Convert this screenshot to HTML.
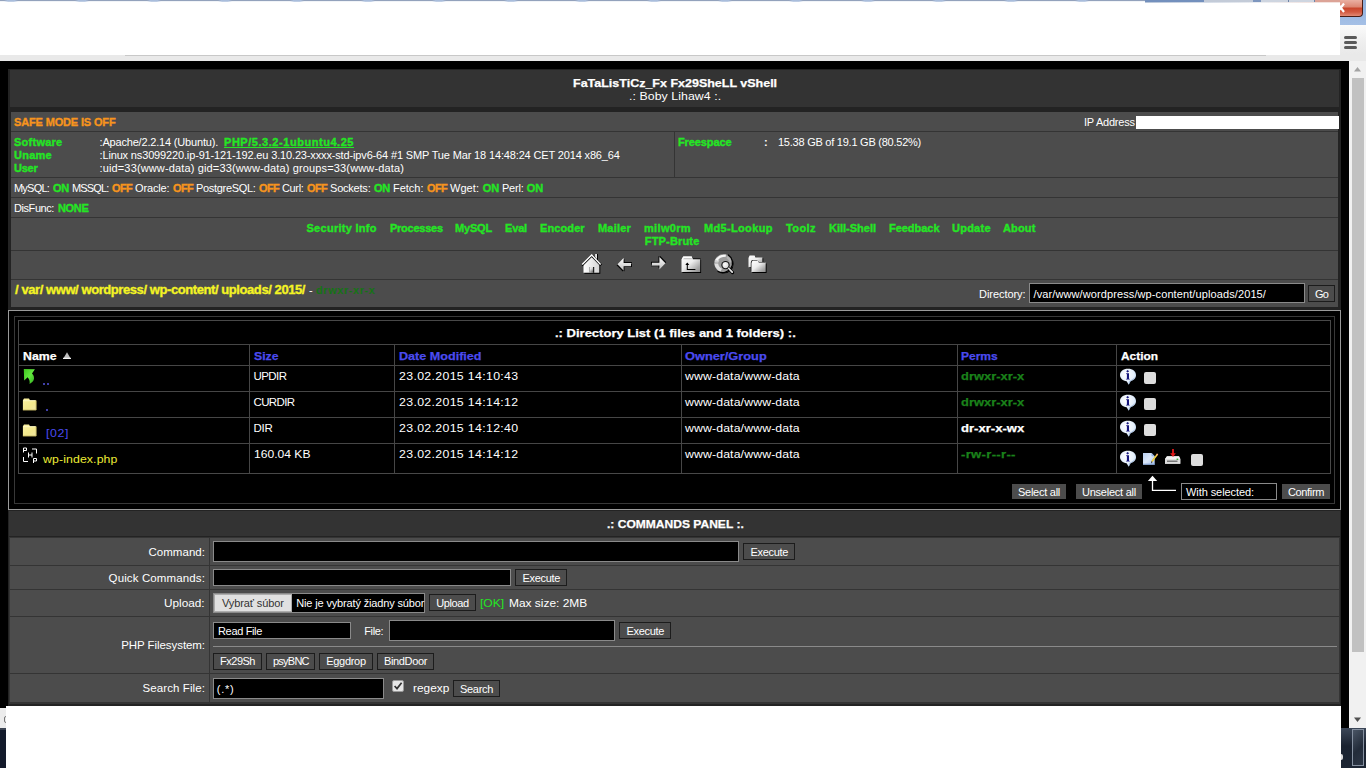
<!DOCTYPE html>
<html><head><meta charset="utf-8"><title>Fx29SheLL</title>
<style>
html,body{margin:0;padding:0;width:1366px;height:768px;overflow:hidden;background:#000;font-family:"Liberation Sans",sans-serif;}
.b{position:absolute;box-sizing:border-box;}
.t{position:absolute;transform-origin:0 0;white-space:pre;line-height:normal;color:#fff;font-family:"Liberation Sans",sans-serif;}
.i{position:absolute;overflow:visible;}

</style></head>
<body>
<div class="b" style="left:0px;top:0px;width:1366px;height:1px;background:#93a2bc;"></div>
<div class="b" style="left:0px;top:1px;width:1366px;height:1px;background:#f1f4f8;"></div>
<div class="b" style="left:4px;top:0px;width:14px;height:1px;background:linear-gradient(90deg,rgba(169,189,220,0),#a9bddc 25%,#a9bddc 75%,rgba(169,189,220,0));"></div>
<div class="b" style="left:4px;top:1px;width:14px;height:1px;background:linear-gradient(90deg,rgba(190,205,228,0),#becde4 30%,#becde4 70%,rgba(190,205,228,0));"></div>
<div class="b" style="left:75px;top:0px;width:14px;height:1px;background:linear-gradient(90deg,rgba(169,189,220,0),#a9bddc 25%,#a9bddc 75%,rgba(169,189,220,0));"></div>
<div class="b" style="left:75px;top:1px;width:14px;height:1px;background:linear-gradient(90deg,rgba(190,205,228,0),#becde4 30%,#becde4 70%,rgba(190,205,228,0));"></div>
<div class="b" style="left:147px;top:0px;width:14px;height:1px;background:linear-gradient(90deg,rgba(169,189,220,0),#a9bddc 25%,#a9bddc 75%,rgba(169,189,220,0));"></div>
<div class="b" style="left:147px;top:1px;width:14px;height:1px;background:linear-gradient(90deg,rgba(190,205,228,0),#becde4 30%,#becde4 70%,rgba(190,205,228,0));"></div>
<div class="b" style="left:218px;top:0px;width:14px;height:1px;background:linear-gradient(90deg,rgba(169,189,220,0),#a9bddc 25%,#a9bddc 75%,rgba(169,189,220,0));"></div>
<div class="b" style="left:218px;top:1px;width:14px;height:1px;background:linear-gradient(90deg,rgba(190,205,228,0),#becde4 30%,#becde4 70%,rgba(190,205,228,0));"></div>
<div class="b" style="left:290px;top:0px;width:14px;height:1px;background:linear-gradient(90deg,rgba(169,189,220,0),#a9bddc 25%,#a9bddc 75%,rgba(169,189,220,0));"></div>
<div class="b" style="left:290px;top:1px;width:14px;height:1px;background:linear-gradient(90deg,rgba(190,205,228,0),#becde4 30%,#becde4 70%,rgba(190,205,228,0));"></div>
<div class="b" style="left:361px;top:0px;width:14px;height:1px;background:linear-gradient(90deg,rgba(169,189,220,0),#a9bddc 25%,#a9bddc 75%,rgba(169,189,220,0));"></div>
<div class="b" style="left:361px;top:1px;width:14px;height:1px;background:linear-gradient(90deg,rgba(190,205,228,0),#becde4 30%,#becde4 70%,rgba(190,205,228,0));"></div>
<div class="b" style="left:432px;top:0px;width:14px;height:1px;background:linear-gradient(90deg,rgba(169,189,220,0),#a9bddc 25%,#a9bddc 75%,rgba(169,189,220,0));"></div>
<div class="b" style="left:432px;top:1px;width:14px;height:1px;background:linear-gradient(90deg,rgba(190,205,228,0),#becde4 30%,#becde4 70%,rgba(190,205,228,0));"></div>
<div class="b" style="left:504px;top:0px;width:14px;height:1px;background:linear-gradient(90deg,rgba(169,189,220,0),#a9bddc 25%,#a9bddc 75%,rgba(169,189,220,0));"></div>
<div class="b" style="left:504px;top:1px;width:14px;height:1px;background:linear-gradient(90deg,rgba(190,205,228,0),#becde4 30%,#becde4 70%,rgba(190,205,228,0));"></div>
<div class="b" style="left:575px;top:0px;width:14px;height:1px;background:linear-gradient(90deg,rgba(169,189,220,0),#a9bddc 25%,#a9bddc 75%,rgba(169,189,220,0));"></div>
<div class="b" style="left:575px;top:1px;width:14px;height:1px;background:linear-gradient(90deg,rgba(190,205,228,0),#becde4 30%,#becde4 70%,rgba(190,205,228,0));"></div>
<div class="b" style="left:647px;top:0px;width:14px;height:1px;background:linear-gradient(90deg,rgba(169,189,220,0),#a9bddc 25%,#a9bddc 75%,rgba(169,189,220,0));"></div>
<div class="b" style="left:647px;top:1px;width:14px;height:1px;background:linear-gradient(90deg,rgba(190,205,228,0),#becde4 30%,#becde4 70%,rgba(190,205,228,0));"></div>
<div class="b" style="left:718px;top:0px;width:14px;height:1px;background:linear-gradient(90deg,rgba(169,189,220,0),#a9bddc 25%,#a9bddc 75%,rgba(169,189,220,0));"></div>
<div class="b" style="left:718px;top:1px;width:14px;height:1px;background:linear-gradient(90deg,rgba(190,205,228,0),#becde4 30%,#becde4 70%,rgba(190,205,228,0));"></div>
<div class="b" style="left:789px;top:0px;width:14px;height:1px;background:linear-gradient(90deg,rgba(169,189,220,0),#a9bddc 25%,#a9bddc 75%,rgba(169,189,220,0));"></div>
<div class="b" style="left:789px;top:1px;width:14px;height:1px;background:linear-gradient(90deg,rgba(190,205,228,0),#becde4 30%,#becde4 70%,rgba(190,205,228,0));"></div>
<div class="b" style="left:861px;top:0px;width:14px;height:1px;background:linear-gradient(90deg,rgba(169,189,220,0),#a9bddc 25%,#a9bddc 75%,rgba(169,189,220,0));"></div>
<div class="b" style="left:861px;top:1px;width:14px;height:1px;background:linear-gradient(90deg,rgba(190,205,228,0),#becde4 30%,#becde4 70%,rgba(190,205,228,0));"></div>
<div class="b" style="left:932px;top:0px;width:14px;height:1px;background:linear-gradient(90deg,rgba(169,189,220,0),#a9bddc 25%,#a9bddc 75%,rgba(169,189,220,0));"></div>
<div class="b" style="left:932px;top:1px;width:14px;height:1px;background:linear-gradient(90deg,rgba(190,205,228,0),#becde4 30%,#becde4 70%,rgba(190,205,228,0));"></div>
<div class="b" style="left:1004px;top:0px;width:14px;height:1px;background:linear-gradient(90deg,rgba(169,189,220,0),#a9bddc 25%,#a9bddc 75%,rgba(169,189,220,0));"></div>
<div class="b" style="left:1004px;top:1px;width:14px;height:1px;background:linear-gradient(90deg,rgba(190,205,228,0),#becde4 30%,#becde4 70%,rgba(190,205,228,0));"></div>
<div class="b" style="left:1075px;top:0px;width:14px;height:1px;background:linear-gradient(90deg,rgba(169,189,220,0),#a9bddc 25%,#a9bddc 75%,rgba(169,189,220,0));"></div>
<div class="b" style="left:1075px;top:1px;width:14px;height:1px;background:linear-gradient(90deg,rgba(190,205,228,0),#becde4 30%,#becde4 70%,rgba(190,205,228,0));"></div>
<div class="b" style="left:1145px;top:0px;width:59px;height:2px;background:#7390bd;"></div>
<div class="b" style="left:1204px;top:0px;width:49px;height:2px;background:#c3cbd8;"></div>
<div class="b" style="left:1253px;top:0px;width:8px;height:2px;background:#7d96be;"></div>
<div class="b" style="left:1261px;top:0px;width:54px;height:2px;background:#ced5e0;"></div>
<div class="b" style="left:1288px;top:0px;width:1px;height:2px;background:#6f84a8;"></div>
<div class="b" style="left:1314px;top:0px;width:1px;height:2px;background:#6f84a8;"></div>
<div class="b" style="left:1315px;top:0px;width:51px;height:2px;background:#dca397;"></div>
<div class="b" style="left:0px;top:2px;width:1340px;height:53px;background:#fff;"></div>
<div class="b" style="left:1145px;top:2px;width:195px;height:1px;background:linear-gradient(90deg,#b9c6da,#d9dfe9 35%,#eceef2 60%,#f3e2de 90%);"></div>
<div class="b" style="left:1340px;top:0px;width:26px;height:25px;background:linear-gradient(#8fb0dd,#a5c0e6);"></div>
<div class="b" style="left:1340px;top:0px;width:23px;height:17px;background:linear-gradient(#eab0a2 0%,#dc8672 44%,#c8452b 50%,#d25a42 75%,#e28a74 100%);border-radius:0 0 4px 0;border:1px solid #4a1c14;border-top:0;border-left:0;"></div>
<div class="b" style="left:1340px;top:25px;width:26px;height:36px;background:linear-gradient(#fbfbfb,#f0f0f0 40%,#e6e6e6);"></div>
<div class="b" style="left:0px;top:55px;width:1366px;height:6px;background:#e9e9e9;"></div>
<div class="b" style="left:125px;top:55px;width:1141px;height:1px;background:#c8c8c8;"></div>
<div class="b" style="left:1344px;top:36px;width:13px;height:3px;background:#5a5a5a;border-radius:1.5px;"></div>
<div class="b" style="left:1344px;top:41px;width:13px;height:3px;background:#5a5a5a;border-radius:1.5px;"></div>
<div class="b" style="left:1344px;top:46px;width:13px;height:3px;background:#5a5a5a;border-radius:1.5px;"></div>
<div class="b" style="left:1349px;top:61px;width:17px;height:667px;background:#f1f1f1;"></div>
<div class="b" style="left:1352px;top:78px;width:12px;height:574px;background:#c1c1c1;"></div>
<div class="b" style="left:0px;top:706px;width:6px;height:22px;background:#ececec;"></div>
<div class="b" style="left:0px;top:706px;width:6px;height:2px;background:#000;"></div>
<div class="b" style="left:0px;top:728px;width:6px;height:40px;background:#131a2b;"></div>
<div class="b" style="left:0px;top:728px;width:6px;height:2px;background:#3c4452;"></div>
<div class="b" style="left:4px;top:716px;width:4px;height:7px;border:1.2px solid #777;border-radius:4px;"></div>
<div class="b" style="left:1341px;top:728px;width:25px;height:40px;background:linear-gradient(#3c4758,#1a2230 45%,#1c2533);"></div>
<div class="b" style="left:1341px;top:754px;width:2px;height:6px;background:#dcdcdc;border-radius:0 2px 2px 0;"></div>
<div class="b" style="left:1352px;top:729px;width:12px;height:37px;background:linear-gradient(135deg,#4a5565,#232c3a 55%,#2c3645);border:1px solid #8590a0;"></div>
<div class="b" style="left:8px;top:69px;width:1333px;height:637px;background:#232323;"></div>
<div class="b" style="left:10px;top:70px;width:1329px;height:37px;background:#333333;"></div>
<div class="b" style="left:11px;top:112px;width:1327px;height:195px;background:#343434;"></div>
<div class="b" style="left:11px;top:112px;width:1327px;height:19px;background:#4c4c4c;"></div>
<div class="b" style="left:11px;top:132px;width:1327px;height:45px;background:#4c4c4c;"></div>
<div class="b" style="left:11px;top:178px;width:1327px;height:19px;background:#4c4c4c;"></div>
<div class="b" style="left:11px;top:198px;width:1327px;height:19px;background:#4c4c4c;"></div>
<div class="b" style="left:11px;top:218px;width:1327px;height:32px;background:#4c4c4c;"></div>
<div class="b" style="left:11px;top:251px;width:1327px;height:28px;background:#4c4c4c;"></div>
<div class="b" style="left:11px;top:280px;width:1327px;height:27px;background:#4c4c4c;"></div>
<div class="b" style="left:674px;top:132px;width:1px;height:45px;background:#343434;"></div>
<div class="b" style="left:1136px;top:116px;width:203px;height:13px;background:#fff;"></div>
<div class="b" style="left:1029px;top:283px;width:276px;height:20px;background:#000;border:1px solid #8a8a8a;"></div>
<div class="b" style="left:1308px;top:285px;width:27px;height:17px;background:#4c4c4c;border:1px solid #1c1c1c;"></div>
<div class="b" style="left:8px;top:310px;width:1333px;height:200px;background:#000;border:1px solid #9a9a9a;"></div>
<div class="b" style="left:14px;top:316px;width:1321px;height:188px;background:#000;border:1px solid #383838;"></div>
<div class="b" style="left:18px;top:320px;width:1313px;height:154px;background:#000;border:1px solid #484848;"></div>
<div class="b" style="left:19px;top:344px;width:1311px;height:1px;background:#464646;"></div>
<div class="b" style="left:19px;top:365px;width:1311px;height:1px;background:#464646;"></div>
<div class="b" style="left:19px;top:391px;width:1311px;height:1px;background:#464646;"></div>
<div class="b" style="left:19px;top:417px;width:1311px;height:1px;background:#464646;"></div>
<div class="b" style="left:19px;top:443px;width:1311px;height:1px;background:#464646;"></div>
<div class="b" style="left:249px;top:345px;width:1px;height:128px;background:#464646;"></div>
<div class="b" style="left:394px;top:345px;width:1px;height:128px;background:#464646;"></div>
<div class="b" style="left:681px;top:345px;width:1px;height:128px;background:#464646;"></div>
<div class="b" style="left:957px;top:345px;width:1px;height:128px;background:#464646;"></div>
<div class="b" style="left:1116px;top:345px;width:1px;height:128px;background:#464646;"></div>
<div class="b" style="left:1012px;top:484px;width:54px;height:15px;background:#4c4c4c;"></div>
<div class="b" style="left:1076px;top:484px;width:66px;height:15px;background:#4c4c4c;"></div>
<div class="b" style="left:1282px;top:484px;width:48px;height:15px;background:#4c4c4c;"></div>
<div class="b" style="left:1181px;top:483px;width:96px;height:17px;background:#000;border:1px solid #8a8a8a;"></div>
<div class="b" style="left:9px;top:511px;width:1331px;height:25px;background:#333333;"></div>
<div class="b" style="left:9px;top:537px;width:1331px;height:167px;background:#343434;"></div>
<div class="b" style="left:10px;top:538px;width:199px;height:27px;background:#4c4c4c;"></div>
<div class="b" style="left:210px;top:538px;width:1129px;height:27px;background:#4c4c4c;"></div>
<div class="b" style="left:10px;top:566px;width:199px;height:23px;background:#4c4c4c;"></div>
<div class="b" style="left:210px;top:566px;width:1129px;height:23px;background:#4c4c4c;"></div>
<div class="b" style="left:10px;top:590px;width:199px;height:26px;background:#4c4c4c;"></div>
<div class="b" style="left:210px;top:590px;width:1129px;height:26px;background:#4c4c4c;"></div>
<div class="b" style="left:10px;top:617px;width:199px;height:56px;background:#4c4c4c;"></div>
<div class="b" style="left:210px;top:617px;width:1129px;height:56px;background:#4c4c4c;"></div>
<div class="b" style="left:10px;top:674px;width:199px;height:28px;background:#4c4c4c;"></div>
<div class="b" style="left:210px;top:674px;width:1129px;height:28px;background:#4c4c4c;"></div>
<div class="b" style="left:213px;top:541px;width:526px;height:21px;background:#000;border:1px solid #8a8a8a;"></div>
<div class="b" style="left:743px;top:543px;width:52px;height:17px;background:#4c4c4c;border:1px solid #1c1c1c;"></div>
<div class="b" style="left:213px;top:569px;width:298px;height:17px;background:#000;border:1px solid #8a8a8a;"></div>
<div class="b" style="left:515px;top:569px;width:52px;height:17px;background:#4c4c4c;border:1px solid #1c1c1c;"></div>
<div class="b" style="left:213px;top:593px;width:212px;height:20px;background:#000;border:1px solid #8a8a8a;"></div>
<div class="b" style="left:214px;top:594px;width:78px;height:18px;background:#e1e1e1;border:1px solid #adadad;"></div>
<div class="b" style="left:429px;top:594px;width:47px;height:17px;background:#4c4c4c;border:1px solid #1c1c1c;"></div>
<div class="b" style="left:213px;top:622px;width:138px;height:17px;background:#000;border:1px solid #8a8a8a;"></div>
<div class="b" style="left:389px;top:620px;width:226px;height:21px;background:#000;border:1px solid #8a8a8a;"></div>
<div class="b" style="left:619px;top:622px;width:52px;height:17px;background:#4c4c4c;border:1px solid #1c1c1c;"></div>
<div class="b" style="left:213px;top:646px;width:1124px;height:1px;background:#8a8a8a;"></div>
<div class="b" style="left:213px;top:653px;width:49px;height:17px;background:#4c4c4c;border:1px solid #1c1c1c;"></div>
<div class="b" style="left:266px;top:653px;width:49px;height:17px;background:#4c4c4c;border:1px solid #1c1c1c;"></div>
<div class="b" style="left:319px;top:653px;width:54px;height:17px;background:#4c4c4c;border:1px solid #1c1c1c;"></div>
<div class="b" style="left:377px;top:653px;width:57px;height:17px;background:#4c4c4c;border:1px solid #1c1c1c;"></div>
<div class="b" style="left:213px;top:678px;width:171px;height:21px;background:#000;border:1px solid #8a8a8a;"></div>
<div class="b" style="left:453px;top:680px;width:47px;height:17px;background:#4c4c4c;border:1px solid #1c1c1c;"></div>
<div class="b" style="left:392px;top:680px;width:12px;height:12px;background:#e6e6e6;border:1px solid #9a9a9a;border-radius:2px;"></div>
<div class="b" style="left:6px;top:706px;width:1335px;height:62px;background:#fff;"></div>
<div class="b" style="left:43px;top:383px;width:2px;height:2px;background:#4040a8;"></div>
<div class="b" style="left:47px;top:383px;width:2px;height:2px;background:#4040a8;"></div>
<div class="b" style="left:46px;top:409px;width:2px;height:2px;background:#4040a8;"></div>
<span class="t" style="left:572.5px;top:77px;font-size:11.5px;font-weight:700;transform:scaleX(1.0862);-webkit-text-stroke:0.25px;">FaTaLisTiCz_Fx Fx29SheLL vShell</span>
<span class="t" style="left:629px;top:90px;font-size:11.5px;letter-spacing:0.067px;transform:scaleX(1.07);">.: Boby Lihaw4 :.</span>
<span class="t" style="left:14px;top:116px;font-size:11px;font-weight:700;-webkit-text-stroke:0.35px;color:#f7941d;letter-spacing:-0.15px;">SAFE MODE IS OFF</span>
<span class="t" style="left:1084px;top:116px;font-size:11px;letter-spacing:-0.225px;">IP Address</span>
<span class="t" style="left:14px;top:136px;font-size:11px;font-weight:700;-webkit-text-stroke:0.35px;color:#24e624;letter-spacing:0.254px;">Software</span>
<span class="t" style="left:14px;top:149px;font-size:11px;font-weight:700;-webkit-text-stroke:0.35px;color:#24e624;letter-spacing:0.263px;">Uname</span>
<span class="t" style="left:14px;top:162px;font-size:11px;font-weight:700;-webkit-text-stroke:0.35px;color:#24e624;letter-spacing:-0.242px;">User</span>
<span class="t" style="left:99.5px;top:136px;font-size:11px;letter-spacing:-0.179px;">:Apache/2.2.14 (Ubuntu). </span>
<span class="t" style="left:224px;top:136px;font-size:11px;font-weight:700;-webkit-text-stroke:0.35px;color:#24e624;letter-spacing:0.543px;text-decoration:underline;">PHP/5.3.2-1ubuntu4.25</span>
<span class="t" style="left:99.5px;top:149px;font-size:11px;letter-spacing:-0.149px;">:Linux ns3099220.ip-91-121-192.eu 3.10.23-xxxx-std-ipv6-64 #1 SMP Tue Mar 18 14:48:24 CET 2014 x86_64</span>
<span class="t" style="left:99.5px;top:162px;font-size:11px;letter-spacing:0.142px;">:uid=33(www-data) gid=33(www-data) groups=33(www-data)</span>
<span class="t" style="left:678px;top:136px;font-size:11px;font-weight:700;-webkit-text-stroke:0.35px;color:#24e624;letter-spacing:-0.104px;">Freespace</span>
<span class="t" style="left:764px;top:136px;font-size:11px;font-weight:700;">:</span>
<span class="t" style="left:778px;top:136px;font-size:11px;letter-spacing:-0.243px;">15.38 GB of 19.1 GB (80.52%)</span>
<span class="t" style="left:14px;top:182px;font-size:11px;letter-spacing:-0.789px;">MySQL:</span>
<span class="t" style="left:53px;top:182px;font-size:11px;font-weight:700;-webkit-text-stroke:0.35px;color:#24e624;letter-spacing:-0.25px;">ON</span>
<span class="t" style="left:72px;top:182px;font-size:11px;letter-spacing:-0.846px;">MSSQL:</span>
<span class="t" style="left:112px;top:182px;font-size:11px;font-weight:700;-webkit-text-stroke:0.35px;color:#f7941d;letter-spacing:-0.667px;">OFF</span>
<span class="t" style="left:135px;top:182px;font-size:11px;letter-spacing:-0.138px;">Oracle:</span>
<span class="t" style="left:173px;top:182px;font-size:11px;font-weight:700;-webkit-text-stroke:0.35px;color:#f7941d;letter-spacing:-0.667px;">OFF</span>
<span class="t" style="left:196px;top:182px;font-size:11px;letter-spacing:-0.317px;">PostgreSQL:</span>
<span class="t" style="left:259px;top:182px;font-size:11px;font-weight:700;-webkit-text-stroke:0.35px;color:#f7941d;letter-spacing:-0.667px;">OFF</span>
<span class="t" style="left:282px;top:182px;font-size:11px;letter-spacing:-0.347px;">Curl:</span>
<span class="t" style="left:307px;top:182px;font-size:11px;font-weight:700;-webkit-text-stroke:0.35px;color:#f7941d;letter-spacing:-0.667px;">OFF</span>
<span class="t" style="left:330px;top:182px;font-size:11px;letter-spacing:-0.211px;">Sockets:</span>
<span class="t" style="left:374px;top:182px;font-size:11px;font-weight:700;-webkit-text-stroke:0.35px;color:#24e624;letter-spacing:-0.25px;">ON</span>
<span class="t" style="left:393px;top:182px;font-size:11px;letter-spacing:-0.013px;">Fetch:</span>
<span class="t" style="left:427px;top:182px;font-size:11px;font-weight:700;-webkit-text-stroke:0.35px;color:#f7941d;letter-spacing:-0.667px;">OFF</span>
<span class="t" style="left:450px;top:182px;font-size:11px;letter-spacing:0.053px;">Wget:</span>
<span class="t" style="left:482.75px;top:182px;font-size:11px;font-weight:700;-webkit-text-stroke:0.35px;color:#24e624;letter-spacing:-0.125px;">ON</span>
<span class="t" style="left:502px;top:182px;font-size:11px;letter-spacing:-0.225px;">Perl:</span>
<span class="t" style="left:526.75px;top:182px;font-size:11px;font-weight:700;-webkit-text-stroke:0.35px;color:#24e624;letter-spacing:-0.125px;">ON</span>
<span class="t" style="left:14px;top:202px;font-size:11px;letter-spacing:-0.426px;">DisFunc:</span>
<span class="t" style="left:58px;top:202px;font-size:11px;font-weight:700;-webkit-text-stroke:0.35px;color:#24e624;letter-spacing:-0.32px;">NONE</span>
<span class="t" style="left:306.5px;top:222px;font-size:11px;font-weight:700;-webkit-text-stroke:0.35px;color:#24e624;letter-spacing:0.279px;">Security Info</span>
<span class="t" style="left:390px;top:222px;font-size:11px;font-weight:700;-webkit-text-stroke:0.35px;color:#24e624;letter-spacing:-0.255px;">Processes</span>
<span class="t" style="left:455px;top:222px;font-size:11px;font-weight:700;-webkit-text-stroke:0.35px;color:#24e624;letter-spacing:-0.181px;">MySQL</span>
<span class="t" style="left:505px;top:222px;font-size:11px;font-weight:700;-webkit-text-stroke:0.35px;color:#24e624;letter-spacing:-0.16px;">Eval</span>
<span class="t" style="left:540px;top:222px;font-size:11px;font-weight:700;-webkit-text-stroke:0.35px;color:#24e624;letter-spacing:0.105px;">Encoder</span>
<span class="t" style="left:598px;top:222px;font-size:11px;font-weight:700;-webkit-text-stroke:0.35px;color:#24e624;letter-spacing:0.201px;">Mailer</span>
<span class="t" style="left:644px;top:222px;font-size:11px;font-weight:700;-webkit-text-stroke:0.35px;color:#24e624;letter-spacing:0.337px;">milw0rm</span>
<span class="t" style="left:704px;top:222px;font-size:11px;font-weight:700;-webkit-text-stroke:0.35px;color:#24e624;letter-spacing:0.336px;">Md5-Lookup</span>
<span class="t" style="left:786px;top:222px;font-size:11px;font-weight:700;-webkit-text-stroke:0.35px;color:#24e624;letter-spacing:0.419px;">Toolz</span>
<span class="t" style="left:829px;top:222px;font-size:11px;font-weight:700;-webkit-text-stroke:0.35px;color:#24e624;letter-spacing:-0.006px;">Kill-Shell</span>
<span class="t" style="left:889px;top:222px;font-size:11px;font-weight:700;-webkit-text-stroke:0.35px;color:#24e624;letter-spacing:-0.031px;">Feedback</span>
<span class="t" style="left:952px;top:222px;font-size:11px;font-weight:700;-webkit-text-stroke:0.35px;color:#24e624;letter-spacing:0.245px;">Update</span>
<span class="t" style="left:1003px;top:222px;font-size:11px;font-weight:700;-webkit-text-stroke:0.35px;color:#24e624;letter-spacing:0.147px;">About</span>
<span class="t" style="left:644.75px;top:235px;font-size:11px;font-weight:700;-webkit-text-stroke:0.35px;color:#24e624;letter-spacing:0.175px;">FTP-Brute</span>
<span class="t" style="left:15px;top:282px;font-size:13px;font-weight:700;-webkit-text-stroke:0.35px;color:#f4f424;letter-spacing:-0.421px;">/ var/ www/ wordpress/ wp-content/ uploads/ 2015/</span>
<span class="t" style="left:309px;top:284px;font-size:11px;letter-spacing:0.328px;">-</span>
<span class="t" style="left:316px;top:284px;font-size:11px;font-weight:700;color:#157315;letter-spacing:0.57px;">drwxr-xr-x</span>
<span class="t" style="left:979px;top:288px;font-size:11px;letter-spacing:-0.056px;">Directory:</span>
<span class="t" style="left:1033.5px;top:288px;font-size:11px;letter-spacing:0.103px;">/var/www/wordpress/wp-content/uploads/2015/</span>
<span class="t" style="left:1315px;top:288px;font-size:11px;letter-spacing:-0.694px;">Go</span>
<span class="t" style="left:555px;top:327px;font-size:11.5px;font-weight:700;transform:scaleX(1.1314);-webkit-text-stroke:0.25px;">.: Directory List (1 files and 1 folders) :.</span>
<span class="t" style="left:22.5px;top:350px;font-size:11.5px;font-weight:700;transform:scaleX(1.0693);-webkit-text-stroke:0.25px;">Name</span>
<span class="t" style="left:253.5px;top:350px;font-size:11.5px;font-weight:700;color:#4b4bf0;transform:scaleX(1.0645);-webkit-text-stroke:0.25px;">Size</span>
<span class="t" style="left:398.5px;top:350px;font-size:11.5px;font-weight:700;color:#4b4bf0;transform:scaleX(1.0943);-webkit-text-stroke:0.25px;">Date Modified</span>
<span class="t" style="left:685.25px;top:350px;font-size:11.5px;font-weight:700;color:#4b4bf0;transform:scaleX(1.1125);-webkit-text-stroke:0.25px;">Owner/Group</span>
<span class="t" style="left:961.25px;top:350px;font-size:11.5px;font-weight:700;color:#4b4bf0;transform:scaleX(1.0449);-webkit-text-stroke:0.25px;">Perms</span>
<span class="t" style="left:1120.5px;top:350px;font-size:11.5px;font-weight:700;transform:scaleX(1.0341);-webkit-text-stroke:0.25px;">Action</span>
<span class="t" style="left:253.5px;top:370px;font-size:11.5px;letter-spacing:-0.556px;">UPDIR</span>
<span class="t" style="left:398.5px;top:370px;font-size:11.5px;letter-spacing:0.324px;transform:scaleX(1.07);">23.02.2015 14:10:43</span>
<span class="t" style="left:685.25px;top:370px;font-size:11.5px;letter-spacing:0.105px;transform:scaleX(1.07);">www-data/www-data</span>
<span class="t" style="left:961.25px;top:370px;font-size:11.5px;font-weight:700;color:#1a821a;transform:scaleX(1.1244);-webkit-text-stroke:0.25px;">drwxr-xr-x</span>
<span class="t" style="left:253.5px;top:396px;font-size:11.5px;letter-spacing:-0.622px;">CURDIR</span>
<span class="t" style="left:398.5px;top:396px;font-size:11.5px;letter-spacing:0.324px;transform:scaleX(1.07);">23.02.2015 14:14:12</span>
<span class="t" style="left:685.25px;top:396px;font-size:11.5px;letter-spacing:0.105px;transform:scaleX(1.07);">www-data/www-data</span>
<span class="t" style="left:961.25px;top:396px;font-size:11.5px;font-weight:700;color:#1a821a;transform:scaleX(1.1244);-webkit-text-stroke:0.25px;">drwxr-xr-x</span>
<span class="t" style="left:253.5px;top:422px;font-size:11.5px;letter-spacing:-0.271px;">DIR</span>
<span class="t" style="left:398.5px;top:422px;font-size:11.5px;letter-spacing:0.324px;transform:scaleX(1.07);">23.02.2015 14:12:40</span>
<span class="t" style="left:685.25px;top:422px;font-size:11.5px;letter-spacing:0.105px;transform:scaleX(1.07);">www-data/www-data</span>
<span class="t" style="left:961.25px;top:422px;font-size:11.5px;font-weight:700;transform:scaleX(1.1374);-webkit-text-stroke:0.25px;">dr-xr-x-wx</span>
<span class="t" style="left:253.5px;top:448px;font-size:11.5px;transform:scaleX(1.0518);">160.04 KB</span>
<span class="t" style="left:398.5px;top:448px;font-size:11.5px;letter-spacing:0.324px;transform:scaleX(1.07);">23.02.2015 14:14:12</span>
<span class="t" style="left:685.25px;top:448px;font-size:11.5px;letter-spacing:0.105px;transform:scaleX(1.07);">www-data/www-data</span>
<span class="t" style="left:961.25px;top:448px;font-size:11.5px;font-weight:700;color:#1a821a;letter-spacing:0.267px;transform:scaleX(1.14);-webkit-text-stroke:0.25px;">-rw-r--r--</span>
<span class="t" style="left:45.5px;top:427px;font-size:11.5px;color:#4b4bf0;letter-spacing:0.577px;transform:scaleX(1.07);">[02]</span>
<span class="t" style="left:42.5px;top:453px;font-size:11.5px;color:#ecec36;letter-spacing:0.102px;transform:scaleX(1.07);">wp-index.php</span>
<span class="t" style="left:1018px;top:486px;font-size:11px;letter-spacing:-0.264px;">Select all</span>
<span class="t" style="left:1082px;top:486px;font-size:11px;letter-spacing:-0.238px;">Unselect all</span>
<span class="t" style="left:1186px;top:486px;font-size:11px;letter-spacing:-0.078px;">With selected:</span>
<span class="t" style="left:1288px;top:486px;font-size:11px;letter-spacing:-0.359px;">Confirm</span>
<span class="t" style="left:606.75px;top:518px;font-size:11.5px;font-weight:700;transform:scaleX(1.0475);-webkit-text-stroke:0.25px;">.: COMMANDS PANEL :.</span>
<span class="t" style="left:148.5px;top:546px;font-size:11.5px;letter-spacing:0.031px;">Command:</span>
<span class="t" style="left:108.6px;top:572px;font-size:11.5px;letter-spacing:0.12px;">Quick Commands:</span>
<span class="t" style="left:164.4px;top:597px;font-size:11.5px;transform:scaleX(1.0242);">Upload:</span>
<span class="t" style="left:121.2px;top:639px;font-size:11.5px;letter-spacing:-0.065px;">PHP Filesystem:</span>
<span class="t" style="left:142.5px;top:682px;font-size:11.5px;letter-spacing:0.095px;">Search File:</span>
<span class="t" style="left:750.5px;top:546px;font-size:11px;letter-spacing:-0.321px;">Execute</span>
<span class="t" style="left:522.5px;top:572px;font-size:11px;letter-spacing:-0.321px;">Execute</span>
<span class="t" style="left:436.25px;top:597px;font-size:11px;letter-spacing:-0.393px;">Upload</span>
<span class="t" style="left:222px;top:597px;font-size:11px;color:#333;letter-spacing:-0.107px;">Vybrať súbor</span>
<span class="t" style="left:296.25px;top:597px;font-size:11px;letter-spacing:-0.149px;">Nie je vybratý žiadny súbor</span>
<span class="t" style="left:480px;top:597px;font-size:11.5px;color:#24e624;transform:scaleX(1.0536);">[OK]</span>
<span class="t" style="left:509.25px;top:597px;font-size:11.5px;transform:scaleX(1.0375);">Max size: 2MB</span>
<span class="t" style="left:218px;top:624.5px;font-size:11px;letter-spacing:-0.342px;">Read File</span>
<span class="t" style="left:364.25px;top:624.5px;font-size:11px;letter-spacing:-0.356px;">File:</span>
<span class="t" style="left:626.5px;top:624.5px;font-size:11px;letter-spacing:-0.321px;">Execute</span>
<span class="t" style="left:220px;top:655px;font-size:11px;letter-spacing:-0.487px;">Fx29Sh</span>
<span class="t" style="left:273px;top:655px;font-size:11px;letter-spacing:-0.766px;">psyBNC</span>
<span class="t" style="left:326.25px;top:655px;font-size:11px;letter-spacing:-0.299px;">Eggdrop</span>
<span class="t" style="left:384px;top:655px;font-size:11px;letter-spacing:-0.357px;">BindDoor</span>
<span class="t" style="left:216.75px;top:682.5px;font-size:11px;letter-spacing:0.77px;">(.*)</span>
<span class="t" style="left:412.5px;top:682px;font-size:11.5px;transform:scaleX(1.0307);">regexp</span>
<span class="t" style="left:460px;top:682.5px;font-size:11px;letter-spacing:-0.31px;">Search</span>
<svg width="0" height="0" style="position:absolute"><defs>
<linearGradient id="gw" x1="0" y1="0" x2="1" y2="1"><stop offset="0" stop-color="#fff"/><stop offset=".45" stop-color="#ececec"/><stop offset=".8" stop-color="#a8a8a8"/><stop offset="1" stop-color="#8c8c8c"/></linearGradient>
<linearGradient id="gh" x1="0" y1="0" x2="1" y2="0"><stop offset="0" stop-color="#fff"/><stop offset="1" stop-color="#d4d4d4"/></linearGradient>
<linearGradient id="gv" x1="0" y1="0" x2="0" y2="1"><stop offset="0" stop-color="#fff"/><stop offset="1" stop-color="#bdbdbd"/></linearGradient>
<linearGradient id="gg" x1="0" y1="0" x2="1" y2="1"><stop offset="0" stop-color="#3fc41e"/><stop offset=".5" stop-color="#62e83f"/><stop offset="1" stop-color="#2fa81c"/></linearGradient>
<linearGradient id="gf" x1="0" y1="0" x2="1" y2="1"><stop offset="0" stop-color="#fbf3a4"/><stop offset=".6" stop-color="#f3e88c"/><stop offset="1" stop-color="#efe6a8"/></linearGradient>
<radialGradient id="gi" cx=".4" cy=".35" r=".75"><stop offset="0" stop-color="#fff"/><stop offset=".6" stop-color="#e6f0fc"/><stop offset="1" stop-color="#b9d4f4"/></radialGradient>
<linearGradient id="gp" x1="0" y1="0" x2="1" y2="1"><stop offset="0" stop-color="#b9d0f2"/><stop offset=".5" stop-color="#dbe7f9"/><stop offset="1" stop-color="#a8c2ec"/></linearGradient>
<linearGradient id="gd" x1="0" y1="0" x2=".6" y2="1"><stop offset="0" stop-color="#fff"/><stop offset=".5" stop-color="#c4c4c4"/><stop offset="1" stop-color="#6e6e6e"/></linearGradient>
<radialGradient id="gl" cx=".4" cy=".4" r=".7"><stop offset="0" stop-color="#fff"/><stop offset="1" stop-color="#cfcfcf"/></radialGradient>
</defs></svg>
<svg class="i" style="left:581px;top:253px" width="22" height="22" viewBox="0 0 22 22">
<path d="M3.4 11.5 L3.4 20.8 L19.3 20.8 L19.3 11.5 Z" fill="#000"/>
<path d="M2.5 11 L10.7 3 L18.3 11 L18.3 19.8 L2.5 19.8Z" fill="url(#gh)"/>
<rect x="14.1" y="1" width="2.9" height="6.4" fill="#000"/>
<rect x="14.1" y="1" width="1.9" height="6" fill="#e6e6e6"/>
<path d="M10.7 1.6 L19.6 11" fill="none" stroke="#000" stroke-width="1.2" transform="translate(1,0.9)"/>
<path d="M1.2 11 L10.7 1.6 L19.6 11" fill="none" stroke="#000" stroke-width="1.2" transform="translate(0,1.7)"/>
<path d="M1.2 11 L10.7 1.6 L19.6 11" fill="none" stroke="#fff" stroke-width="1.4" transform="translate(0,0.4)"/>
<rect x="8.3" y="14" width="4.9" height="5.8" fill="#000"/>
<rect x="8.3" y="14" width="3.8" height="5.8" fill="#d8d8d8"/>
<rect x="9" y="14.7" width="3.1" height="5.1" fill="url(#gd)"/>
</svg>
<svg class="i" style="left:616px;top:256px" width="18" height="17" viewBox="0 0 18 17">
<path d="M1.5 8.3 L7.6 2.1 L7.6 7 L15 7 L15 10.2 L7.6 10.2 L7.6 14.6Z" fill="#000" transform="translate(0.9,0.9)"/>
<path d="M1.5 8.3 L7.6 14.6" stroke="#000" stroke-width="1.1" transform="translate(-0.45,0.55)"/>
<rect x="7.6" y="6.1" width="8.3" height="1" fill="#000"/>
<path d="M1.5 8.3 L7.6 2.1 L7.6 7 L15 7 L15 10.2 L7.6 10.2 L7.6 14.6Z" fill="url(#gv)"/>
</svg>
<svg class="i" style="left:650px;top:256px" width="18" height="17" viewBox="0 0 18 17">
<path d="M15.4 7.2 L9.4 1 L9.4 6.7 L1.9 6.7 L1.9 9.6 L9.4 9.6 L9.4 13.5Z" fill="#000" transform="translate(-0.9,-0.9)"/>
<path d="M9.4 1 L15.4 7.2" stroke="#000" stroke-width="1.1" transform="translate(0.45,-0.55)"/>
<rect x="1" y="9.6" width="8.4" height="0.8" fill="#000" opacity=".6"/>
<path d="M15.4 7.2 L9.4 1 L9.4 6.7 L1.9 6.7 L1.9 9.6 L9.4 9.6 L9.4 13.5Z" fill="url(#gv)"/>
</svg>
<svg class="i" style="left:680px;top:255px" width="22" height="19" viewBox="0 0 22 19">
<path d="M1.5 4.2 L3.3 1.6 L11.7 1.6 L12.8 4.2 L20.2 4.2 L20.2 17 L1.5 17 Z" fill="#000" transform="translate(0.9,0.9)"/>
<path d="M12.4 3.4 L20.6 3.4 L20.6 5 L12.4 5Z" fill="#000"/>
<path d="M1.5 4.2 L3.3 1.6 L11.7 1.6 L12.8 4.2 L20.2 4.2 L20.2 17 L1.5 17 Z" fill="url(#gw)"/>
<path d="M3.3 1.6 L11.7 1.6 L12.6 3.8 L2 3.8Z" fill="#fff"/>
<path d="M4 3 L11.6 3 L12.2 4.2 L3 4.2Z" fill="#c8c8c8"/>
<path d="M7.3 8.2 L7.3 14.4 L15.4 14.4" fill="none" stroke="#000" stroke-width="1.05"/>
<path d="M5.3 10 L7.3 7.6 L9.3 10 Z" fill="#000"/>
</svg>
<svg class="i" style="left:713px;top:253px" width="22" height="22" viewBox="0 0 22 22">
<circle cx="10.6" cy="10.3" r="9.3" fill="#000" transform="translate(0.7,0.7)"/>
<circle cx="10.6" cy="10.3" r="9.3" fill="#9b9b9b"/>
<path d="M1.4 10.6 Q1.8 15.4 7.2 18.9 L9 15.8 Q5.4 13.6 5.2 10.4Z" fill="#e0e0e0"/>
<path d="M1.5 9.6 Q1.8 6.4 3.6 4.6 L6.4 7.8 Q5.4 8.8 5.2 9.8Z" fill="#d0d0d0"/>
<path d="M3.6 7.2 Q6 2.8 12.8 2.7" fill="none" stroke="#f6f6f6" stroke-width="2.3"/>
<path d="M14 3 Q18 5 19.2 9.5 L16.8 9.6 Q16 6.5 13.6 5Z" fill="#b4b4b4"/>
<path d="M15 1.8 A9.6 9.6 0 0 1 4.6 18.2" fill="none" stroke="#000" stroke-width="1.3"/>
<circle cx="12.5" cy="12.1" r="4.2" fill="#111"/>
<circle cx="12.5" cy="12.1" r="3.1" fill="url(#gl)"/>
<path d="M15.8 15.5 L19.2 19.1" stroke="#000" stroke-width="3.2" stroke-linecap="round" transform="translate(0.4,0.5)"/>
<path d="M15.8 15.5 L19.2 19.1" stroke="#e4e4e4" stroke-width="1.8" stroke-linecap="round"/>
</svg>
<svg class="i" style="left:747px;top:254px" width="21" height="20" viewBox="0 0 21 20">
<path d="M1.5 4 L2.6 1.6 L7.6 1.6 L8.6 3.4 L15.4 3.4 L15.4 13.2 L1.5 13.2 Z" fill="#000" transform="translate(0.9,0.9)"/>
<path d="M1.5 4 L2.6 1.6 L7.6 1.6 L8.6 3.4 L15.4 3.4 L15.4 13.2 L1.5 13.2 Z" fill="url(#gw)"/>
<path d="M4.4 9 L5.5 6.6 L10.8 6.6 L11.8 8.6 L18.7 8.6 L18.7 18 L4.4 18 Z" fill="#000" transform="translate(0.9,0.9)"/>
<path d="M4.4 9 L5.5 6.6 L10.8 6.6 L11.8 8.6 L18.7 8.6 L18.7 18 L4.4 18 Z" fill="#000" transform="translate(-0.6,-0.6)"/>
<path d="M4.4 9 L5.5 6.6 L10.8 6.6 L11.8 8.6 L18.7 8.6 L18.7 18 L4.4 18 Z" fill="url(#gw)"/>
</svg>
<svg class="i" style="left:62px;top:351px" width="10" height="9" viewBox="0 0 10 9"><path d="M5 1.2 L8.8 7.8 L1.2 7.8Z" fill="#bdbdbd"/><rect x="1" y="6.8" width="8" height="1.1" fill="#fff"/></svg>
<svg class="i" style="left:23px;top:368px" width="13" height="17" viewBox="0 0 13 17"><path d="M0.8 1 L11.9 1.2 L9 5.4 Q12 8.5 10.6 12.3 Q9.6 14.5 6.6 15.9 Q7.2 12 4.6 9.2 L1.2 12.4 Z" fill="url(#gg)"/></svg>
<svg class="i" style="left:22px;top:398px" width="15" height="13" viewBox="0 0 15 13"><path d="M0.9 2.2 L2 0.4 L7 0.4 L8 2.2 L14.1 2.2 L14.1 12 L0.9 12 Z" fill="url(#gf)"/>
<path d="M14.1 2.6 L14.1 12 L0.9 12" fill="none" stroke="#c9bb62" stroke-width=".9"/>
<path d="M1.4 2.7 L13.4 2.7" stroke="#fffbd0" stroke-width=".8"/></svg>
<svg class="i" style="left:22px;top:424px" width="15" height="13" viewBox="0 0 15 13"><path d="M0.9 2.2 L2 0.4 L7 0.4 L8 2.2 L14.1 2.2 L14.1 12 L0.9 12 Z" fill="url(#gf)"/>
<path d="M14.1 2.6 L14.1 12 L0.9 12" fill="none" stroke="#c9bb62" stroke-width=".9"/>
<path d="M1.4 2.7 L13.4 2.7" stroke="#fffbd0" stroke-width=".8"/></svg>
<svg class="i" style="left:22px;top:447px" width="16" height="17" viewBox="0 0 16 17"><g fill="none" stroke="#fff" stroke-width="1">
<path d="M1.5 5.5 L1.5 1 L4.5 1 L4.5 3.5 L1.5 3.5"/>
<path d="M10 2 L14.5 2 L14.5 6.5"/>
<path d="M6.5 5.5 L6.5 10.5 M10 5.5 L10 10.5 M6.5 8 L10 8"/>
<path d="M1.5 10 L1.5 14.5 L6 14.5"/>
<path d="M11.5 16 L11.5 11.5 L14.5 11.5 L14.5 14 L11.5 14"/>
</g></svg>
<svg class="i" style="left:1120px;top:368px" width="16" height="18" viewBox="0 0 16 18"><path d="M8 0.8 C12.8 0.8 16 3.4 16 7 C16 10.2 13.6 12.4 10.8 13 L8.7 16.7 L6.6 13.2 C2.8 12.8 0 10.4 0 7 C0 3.4 3.2 0.8 8 0.8Z" fill="url(#gi)"/>
<path d="M10.8 13 L8.7 16.7 L9.4 13 Q13 11.5 15 9 Q14 12 10.8 13Z" fill="#7d9ccc" opacity=".6"/>
<path d="M7.6 1.9 L9.1 3.2 L7.6 4.5 L6.2 3.2Z" fill="#15157c"/>
<path d="M6.2 5.3 L9 5.3 L9 10.6 L10 11.4 L5.8 11.4 L6.9 10.6 L6.9 6.3 L6.2 6Z" fill="#15157c"/></svg>
<svg class="i" style="left:1120px;top:394px" width="16" height="18" viewBox="0 0 16 18"><path d="M8 0.8 C12.8 0.8 16 3.4 16 7 C16 10.2 13.6 12.4 10.8 13 L8.7 16.7 L6.6 13.2 C2.8 12.8 0 10.4 0 7 C0 3.4 3.2 0.8 8 0.8Z" fill="url(#gi)"/>
<path d="M10.8 13 L8.7 16.7 L9.4 13 Q13 11.5 15 9 Q14 12 10.8 13Z" fill="#7d9ccc" opacity=".6"/>
<path d="M7.6 1.9 L9.1 3.2 L7.6 4.5 L6.2 3.2Z" fill="#15157c"/>
<path d="M6.2 5.3 L9 5.3 L9 10.6 L10 11.4 L5.8 11.4 L6.9 10.6 L6.9 6.3 L6.2 6Z" fill="#15157c"/></svg>
<svg class="i" style="left:1120px;top:420px" width="16" height="18" viewBox="0 0 16 18"><path d="M8 0.8 C12.8 0.8 16 3.4 16 7 C16 10.2 13.6 12.4 10.8 13 L8.7 16.7 L6.6 13.2 C2.8 12.8 0 10.4 0 7 C0 3.4 3.2 0.8 8 0.8Z" fill="url(#gi)"/>
<path d="M10.8 13 L8.7 16.7 L9.4 13 Q13 11.5 15 9 Q14 12 10.8 13Z" fill="#7d9ccc" opacity=".6"/>
<path d="M7.6 1.9 L9.1 3.2 L7.6 4.5 L6.2 3.2Z" fill="#15157c"/>
<path d="M6.2 5.3 L9 5.3 L9 10.6 L10 11.4 L5.8 11.4 L6.9 10.6 L6.9 6.3 L6.2 6Z" fill="#15157c"/></svg>
<svg class="i" style="left:1120px;top:450px" width="16" height="18" viewBox="0 0 16 18"><path d="M8 0.8 C12.8 0.8 16 3.4 16 7 C16 10.2 13.6 12.4 10.8 13 L8.7 16.7 L6.6 13.2 C2.8 12.8 0 10.4 0 7 C0 3.4 3.2 0.8 8 0.8Z" fill="url(#gi)"/>
<path d="M10.8 13 L8.7 16.7 L9.4 13 Q13 11.5 15 9 Q14 12 10.8 13Z" fill="#7d9ccc" opacity=".6"/>
<path d="M7.6 1.9 L9.1 3.2 L7.6 4.5 L6.2 3.2Z" fill="#15157c"/>
<path d="M6.2 5.3 L9 5.3 L9 10.6 L10 11.4 L5.8 11.4 L6.9 10.6 L6.9 6.3 L6.2 6Z" fill="#15157c"/></svg>
<div class="b" style="left:1144px;top:372px;width:12px;height:12px;background:#dddddd;border-radius:2px;"></div>
<div class="b" style="left:1144px;top:398px;width:12px;height:12px;background:#dddddd;border-radius:2px;"></div>
<div class="b" style="left:1144px;top:424px;width:12px;height:12px;background:#dddddd;border-radius:2px;"></div>
<div class="b" style="left:1191px;top:454px;width:12px;height:12px;background:#dddddd;border-radius:2px;"></div>
<svg class="i" style="left:1142px;top:451px" width="18" height="16" viewBox="0 0 18 16"><path d="M1 2 L9.5 2 L12.7 5.2 L12.7 13.8 L1 13.8Z" fill="url(#gp)"/>
<path d="M9.5 2 L9.5 5.2 L12.7 5.2Z" fill="#8fb0e0"/>
<path d="M1 13.2 L12.7 13.2" stroke="#7f9fd0" stroke-width="1"/>
<path d="M15 2.6 L16.2 3.6 L10.6 11 L9.4 10Z" fill="#e9c21c"/>
<path d="M15 2.6 L16.2 3.6 L15.5 4.6 L14.3 3.6Z" fill="#e8788c"/>
<path d="M9.4 10 L10.6 11 L9 12.4Z" fill="#2a2a2a"/>
<path d="M15.6 3.1 L10 10.5" stroke="#f9e98a" stroke-width=".5"/></svg>
<svg class="i" style="left:1164px;top:448px" width="18" height="18" viewBox="0 0 18 18"><path d="M1 11 L3 8.2 L15 8.2 L16.3 11 L16.3 15.8 L1 15.8Z" fill="#c9c9c9"/>
<path d="M3 8.2 L15 8.2 L16.3 11 L1 11Z" fill="#f1f1f1"/>
<rect x="1" y="11" width="15.3" height="4.8" fill="#dcdcdc"/>
<rect x="3" y="12.6" width="10.5" height="1.2" fill="#5e5e5e"/>
<rect x="12.6" y="10.6" width="1.6" height="1.3" fill="#28b028"/>
<rect x="8.1" y="1" width="1.8" height="6" fill="#e01818"/>
<path d="M6.2 5.2 L11.8 5.2 L9 9Z" fill="#e01818"/></svg>
<svg class="i" style="left:1146px;top:474px" width="32" height="20" viewBox="0 0 32 20"><path d="M6.5 1.8 L11.2 7 L1.9 7Z" fill="#fff"/><path d="M6.5 6 L6.5 16.3 L30 16.3" fill="none" stroke="#fff" stroke-width="1.3"/></svg>
<svg class="i" style="left:1349px;top:61px" width="17" height="17" viewBox="0 0 17 17"><path d="M8.5 6 L12 10.6 L5 10.6Z" fill="#a3a3a3"/></svg>
<svg class="i" style="left:1349px;top:711px" width="17" height="17" viewBox="0 0 17 17"><path d="M8.5 11 L12 6.4 L5 6.4Z" fill="#505050"/></svg>
<svg class="i" style="left:392px;top:680px" width="12" height="12" viewBox="0 0 12 12"><path d="M2.6 6 L5 8.6 L9.6 2.8" fill="none" stroke="#333" stroke-width="1.7"/></svg>
<svg class="i" style="left:1340px;top:2px" width="12" height="14" viewBox="0 0 12 14"><path d="M-2.5 1.5 L4 10 M4 1.5 L-2.5 10" stroke="#fff" stroke-width="2.2"/></svg>
</body></html>
